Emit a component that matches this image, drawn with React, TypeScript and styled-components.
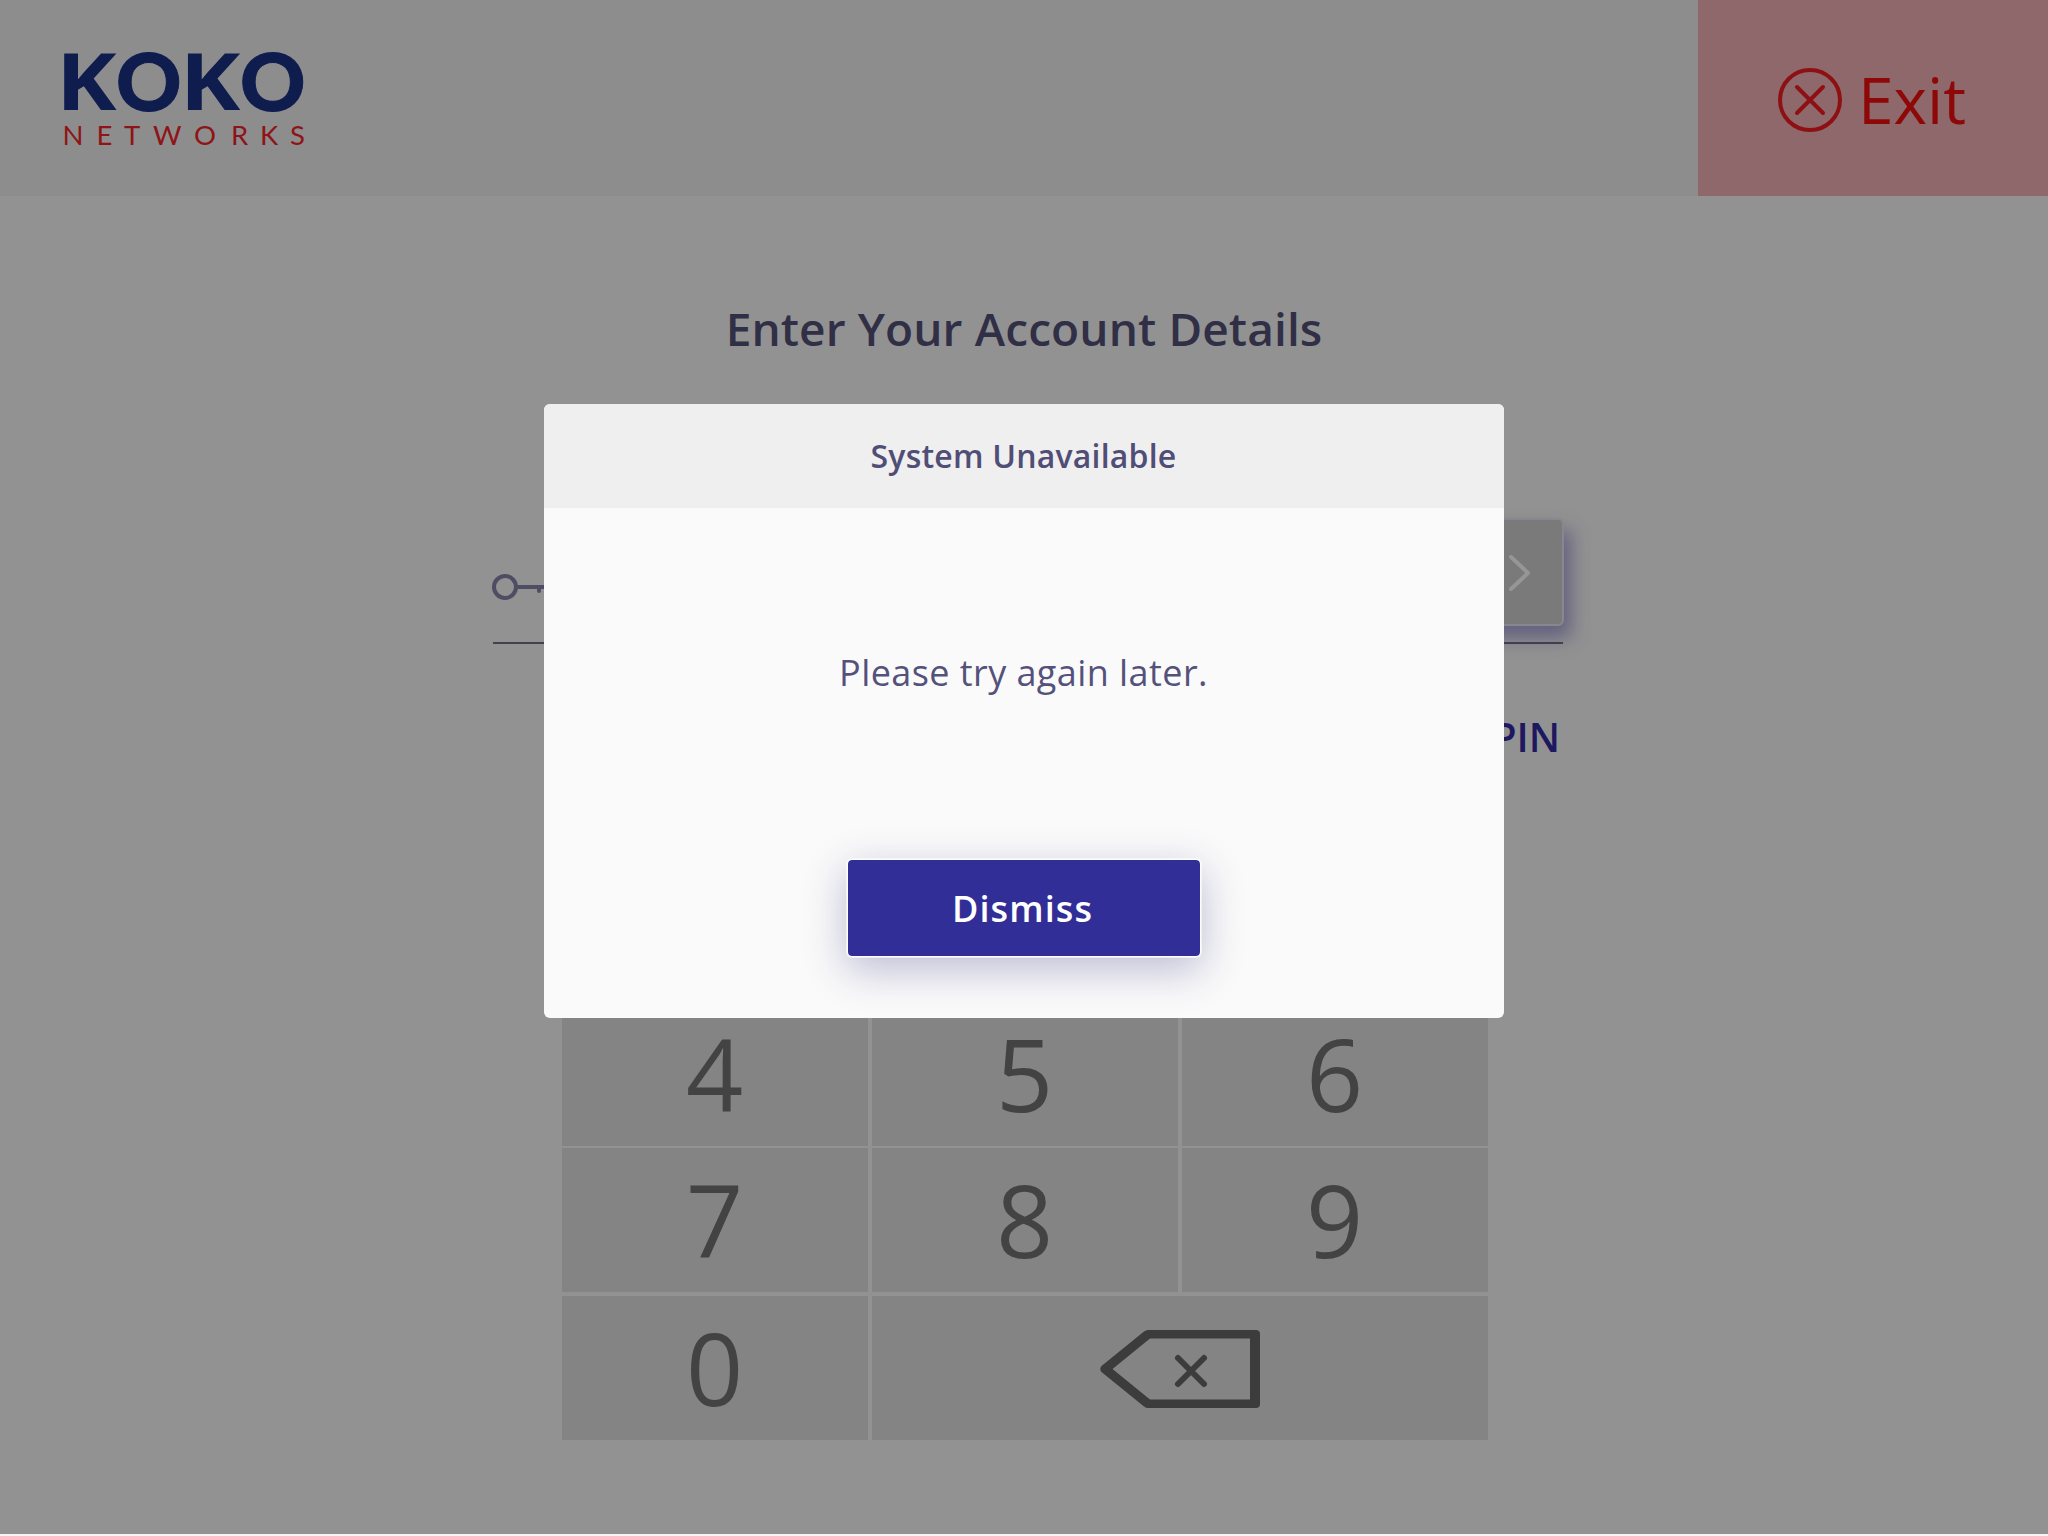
import React from "react";
import styled, { createGlobalStyle } from "styled-components";

const GlobalStyle = createGlobalStyle`
  html, body { margin: 0; padding: 0; background: #f4f4f4; }
  * { box-sizing: border-box; }
  button { margin: 0; padding: 0; border: 0; font: inherit; }
`;

const Screen = styled.div`
  position: relative;
  display: flex;
  flex-direction: column;
  width: 2048px;
  height: 1536px;
  overflow: hidden;
  border-bottom: 2px solid #f4f4f4;
  background: #929292;
  font-family: "Open Sans", "Noto Sans", sans-serif;
`;

const Header = styled.header`
  display: flex;
  justify-content: space-between;
  flex: none;
  height: 196px;
  padding-left: 60px;
  background: #8d8d8d;
`;

const Logo = styled.svg`
  display: block;
  margin-top: 24px;
  width: 260px;
  height: 140px;
  font-family: Lato, sans-serif;
`;

const ExitButton = styled.button`
  display: flex;
  align-items: center;
  width: 350px;
  height: 196px;
  padding: 4px 0 0 80px;
  gap: 16px;
  background: #8e686b;
  color: #8e0808;
  font-size: 64px;
  line-height: 88px;
`;

const Main = styled.main`
  display: flex;
  flex-direction: column;
  align-items: center;
  padding-top: 102px;
`;

const Title = styled.h1`
  margin: 0;
  color: #302f46;
  font-size: 46px;
  font-weight: 600;
  line-height: 60px;
  letter-spacing: 0.12px;
`;

const Field = styled.div`
  display: flex;
  justify-content: space-between;
  width: 1070px;
  height: 126px;
  margin: 160px 0 0 8px;
  border-bottom: 2px solid #444248;
`;

const KeyIcon = styled.svg`
  display: block;
  margin-top: 54px;
  margin-left: -1px;
`;

const NextButton = styled.button`
  display: flex;
  align-items: center;
  justify-content: flex-end;
  width: 108px;
  height: 108px;
  margin-right: -1px;
  padding: 2px 31px 0 0;
  border: 2px solid #87878d;
  border-radius: 6px;
  background: #7a7a7a;
  box-shadow: 7px 12px 18px rgba(58, 52, 110, 0.52);
`;

const PinLink = styled.a`
  align-self: flex-end;
  margin: 65px 488px 0 0;
  color: #1d185f;
  font-size: 40px;
  font-weight: 600;
  line-height: 56px;
`;

const Keypad = styled.div`
  display: grid;
  grid-template-columns: repeat(3, 306px);
  grid-template-rows: 144px 2px 144px 4px 144px;
  column-gap: 4px;
  margin: 237px 0 0 2px;
`;

const Key = styled.button<{ $row: number; $wide?: boolean }>`
  grid-row: ${(p) => p.$row};
  grid-column: ${(p) => (p.$wide ? "span 2" : "auto")};
  display: flex;
  align-items: center;
  justify-content: center;
  padding: ${(p) => (p.$wide ? "2px 0 0" : "0 1px 0 0")};
  background: #848484;
  color: #434343;
  font-size: 100px;
  line-height: 142px;
`;

const Digit = styled.span`
  height: 144px;
`;

const Dialog = styled.section`
  position: absolute;
  left: 544px;
  top: 404px;
  display: flex;
  flex-direction: column;
  align-items: center;
  width: 960px;
  height: 614px;
  border-radius: 6px;
  overflow: hidden;
  background: #fafafa;
`;

const DialogTitle = styled.h2`
  width: 100%;
  height: 104px;
  margin: 0;
  padding-right: 1px;
  background: #efefef;
  color: #504e76;
  font-size: 32px;
  font-weight: 600;
  line-height: 103px;
  letter-spacing: 0.2px;
  text-align: center;
`;

const DialogText = styled.p`
  margin: 135px 1px 0 0;
  color: #54527a;
  font-size: 36px;
  line-height: 60px;
  letter-spacing: 0.43px;
`;

const DismissButton = styled.button`
  width: 356px;
  height: 100px;
  margin-top: 155px;
  padding-right: 3px;
  border: 2px solid rgba(255, 255, 255, 0.6);
  border-radius: 6px;
  background: #312e97;
  background-clip: padding-box;
  box-shadow: 0 12px 40px rgba(49, 46, 130, 0.3);
  color: #fff;
  font-size: 36px;
  font-weight: 600;
  line-height: 98px;
  letter-spacing: 1.1px;
`;

const WordmarkK = styled.text`
  font-family: "Open Sans", sans-serif;
  font-size: 78px;
  font-weight: 700;
  fill: #0f1c4e;
`;

const WordmarkO = styled.text`
  font-size: 80px;
  font-weight: 900;
  fill: #0f1c4e;
  stroke: #0f1c4e;
  stroke-width: 1px;
`;

const keyRows = [
  { row: 1, digits: ["4", "5", "6"] },
  { row: 3, digits: ["7", "8", "9"] },
  { row: 5, digits: ["0"] },
];

export default function App() {
  return (
    <>
      <GlobalStyle />
      <Screen>
        <Header>
          <Logo viewBox="0 0 260 140" role="img" aria-label="Koko Networks">
            <WordmarkK transform="translate(-3.9 86) scale(1.17 1)">K</WordmarkK>
            <WordmarkO transform="translate(56 86.7) scale(1.01 1)">O</WordmarkO>
            <WordmarkK transform="translate(119.8 86) scale(1.17 1)">K</WordmarkK>
            <WordmarkO transform="translate(180 86.7) scale(1.01 1)">O</WordmarkO>
            <text y="121" x="2.500 36.500 64 93 134 171 200 230" fontSize="27.500" fill="#8e1417">
              NETWORKS
            </text>
          </Logo>
          <ExitButton>
            <svg width="64" height="64" viewBox="0 0 64 64" fill="none" stroke="#8e1013" strokeWidth="4" strokeLinecap="round">
              <circle cx="32" cy="32" r="30" />
              <path d="M19 19 45 45M45 19 19 45" />
            </svg>
            <span>Exit</span>
          </ExitButton>
        </Header>
        <Main>
          <Title>Enter Your Account Details</Title>
          <Field>
            <KeyIcon width="72" height="30" viewBox="0 0 72 30" fill="none" stroke="#4f4d63" strokeWidth="4">
              <circle cx="13" cy="15" r="11" />
              <path d="M24 15H70M47 15V19" strokeLinecap="round" />
            </KeyIcon>
            <NextButton aria-label="Next">
              <svg width="22" height="36" viewBox="0 0 22 36" fill="none" stroke="#969696" strokeWidth="4" strokeLinecap="round" strokeLinejoin="round">
                <path d="M2 2 19 18 2 34" />
              </svg>
            </NextButton>
          </Field>
          <PinLink>PIN</PinLink>
          <Keypad>
            {keyRows.map(({ row, digits }) =>
              digits.map((digit) => (
                <Key key={digit} $row={row}>
                  <Digit>{digit}</Digit>
                </Key>
              ))
            )}
            <Key $row={5} $wide aria-label="Delete">
              <svg width="160" height="78" viewBox="0 0 160 78" fill="#3c3c3c">
                <path
                  fillRule="evenodd"
                  d="M48 0H156Q160 0 160 4V74Q160 78 156 78H48Q46 78 44 76.500L1.500 42Q-1 39 1.500 36L44 1.500Q46 0 48 0ZM50 8.500 12.500 39 50 69.500H150V8.500Z"
                />
                <path d="M78 28 104 54M104 28 78 54" stroke="#3c3c3c" strokeWidth="6" strokeLinecap="round" />
              </svg>
            </Key>
          </Keypad>
        </Main>
        <Dialog role="dialog" aria-label="System Unavailable">
          <DialogTitle>System Unavailable</DialogTitle>
          <DialogText>Please try again later.</DialogText>
          <DismissButton>Dismiss</DismissButton>
        </Dialog>
      </Screen>
    </>
  );
}
